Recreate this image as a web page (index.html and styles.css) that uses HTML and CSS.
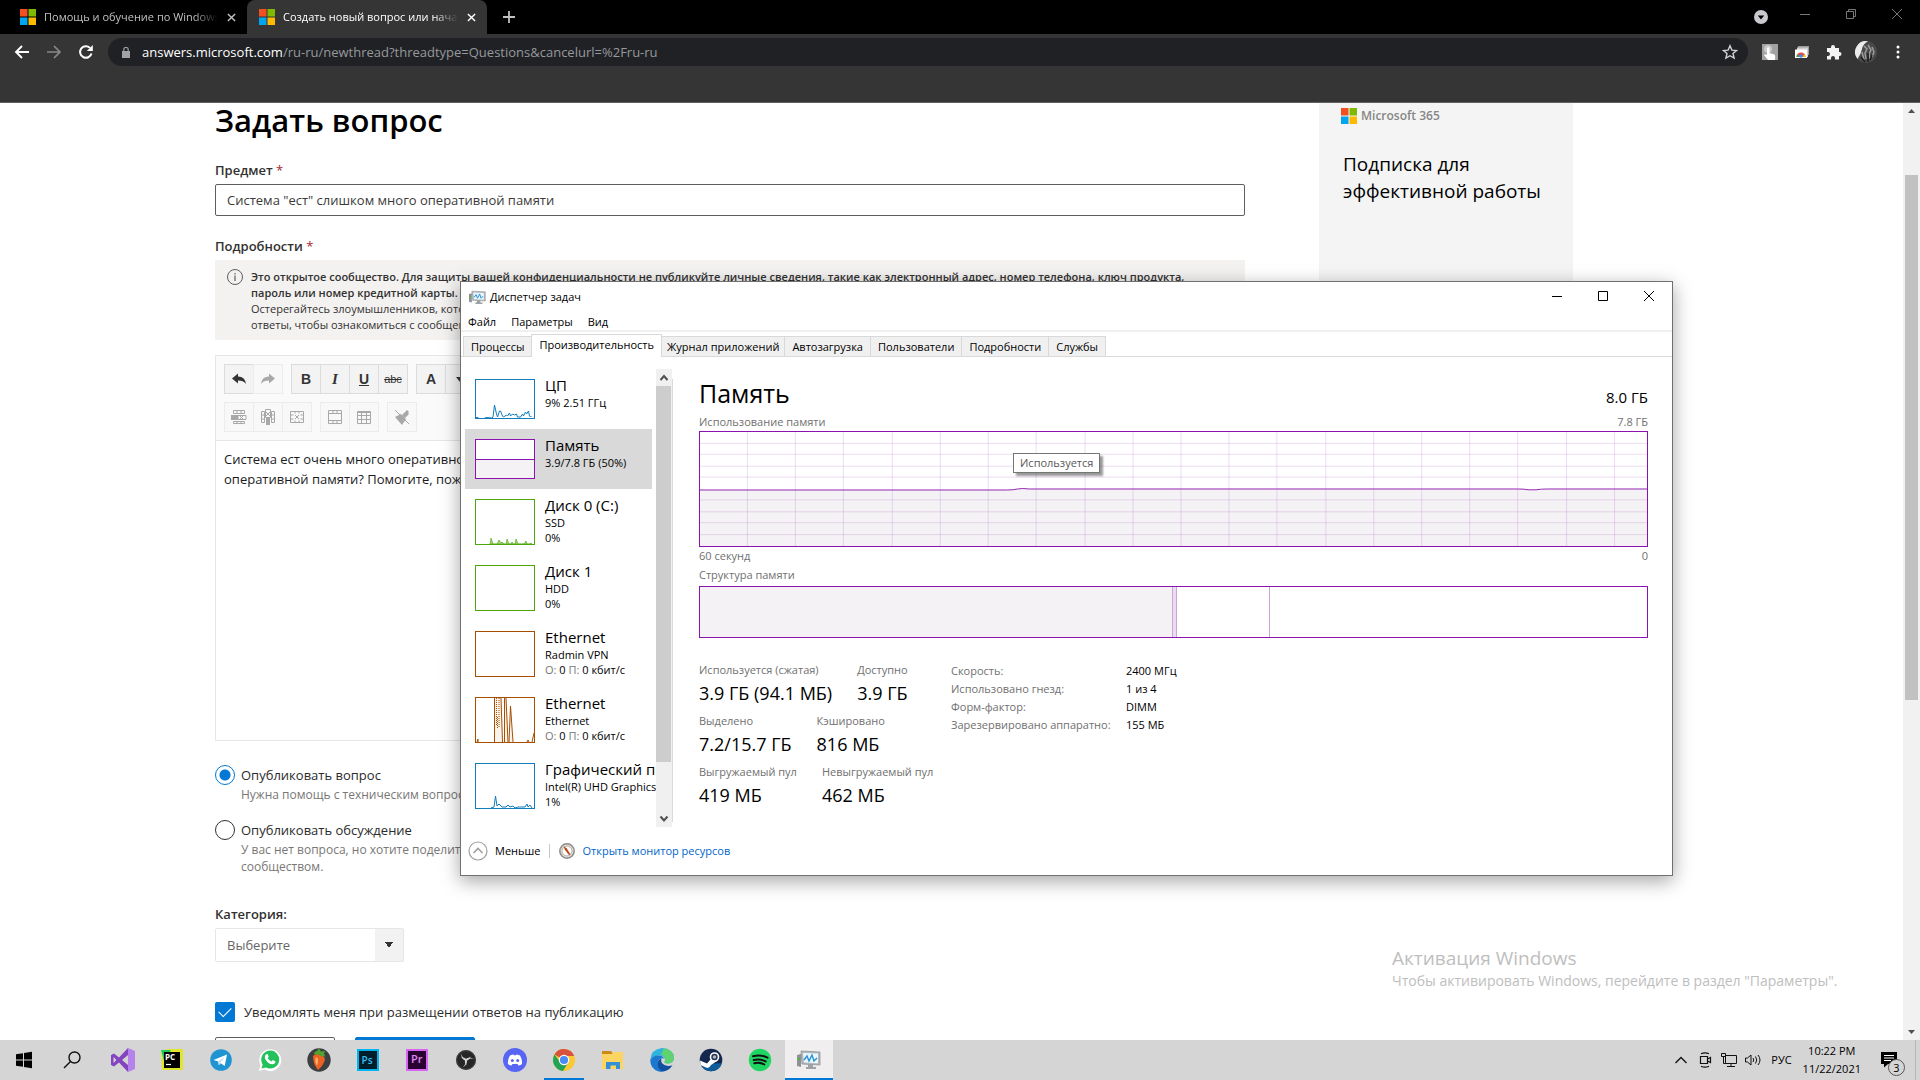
FILE: index.html
```
<!DOCTYPE html>
<html lang="ru">
<head>
<meta charset="utf-8">
<title>Создать новый вопрос или начать обсуждение</title>
<link rel="stylesheet" href="styles.css">
</head>
<body>
<svg class="defs" aria-hidden="true">
  <symbol id="ms" viewBox="0 0 16 16"><path fill="#f25022" d="M0 0h7.5v7.5H0z"/><path fill="#7fba00" d="M8.5 0H16v7.5H8.5z"/><path fill="#00a4ef" d="M0 8.500h7.5V16H0z"/><path fill="#ffb900" d="M8.500 8.500H16V16H8.500z"/></symbol>
  <symbol id="x" viewBox="0 0 10 10"><path d="M1 1l8 8M9 1L1 9" fill="none" stroke="currentColor" stroke-width="1.600"/></symbol>
  <symbol id="taskmgr" viewBox="0 0 24 20"><path d="M0 5l4-1v13l-4-1z" fill="#8d9296"/><path d="M1 8h2v2H1z" fill="#4fb828"/><path d="M4 1l19 1v13L5 14z" fill="#b4b9bd" stroke="#85898d" stroke-width=".7"/><path d="M6 3l15 .6v9.600L7 12.500z" fill="#eaf5fc"/><path d="M7 10l3-4 2 5 3-6 2 6 3-3" fill="none" stroke="#2893d3" stroke-width="1.400"/><path d="M11 14h5v3h3v2H9v-2h2z" fill="#9da2a6"/></symbol>
</svg>

<header class="browser">
  <div class="tabstrip">
    <div class="tab">
      <svg class="favicon"><use href="#ms"/></svg>
      <span class="tab-title">Помощь и обучение по Windows</span>
      <button class="tab-close" aria-label="Закрыть вкладку"><svg><use href="#x"/></svg></button>
    </div>
    <div class="tab tab-active">
      <svg class="favicon"><use href="#ms"/></svg>
      <span class="tab-title">Создать новый вопрос или начать</span>
      <button class="tab-close" aria-label="Закрыть вкладку"><svg><use href="#x"/></svg></button>
    </div>
    <button class="new-tab" aria-label="Новая вкладка"><svg viewBox="0 0 12 12"><path d="M6 0v12M0 6h12" stroke="currentColor" stroke-width="1.800"/></svg></button>
    <button class="tab-search" aria-label="Поиск вкладок"><svg viewBox="0 0 14 14"><circle cx="7" cy="7" r="7" fill="#c7c9cc"/><path d="M3.800 5.500h6.400L7 9.500z" fill="#000"/></svg></button>
    <div class="caption">
      <button aria-label="Свернуть"><svg viewBox="0 0 10 10"><path d="M0 5.500h10"/></svg></button>
      <button aria-label="Восстановить"><svg viewBox="0 0 10 10"><path d="M.5 2.500h7v7h-7zM2.500 2.500v-2h7v7h-2"/></svg></button>
      <button aria-label="Закрыть"><svg viewBox="0 0 10 10"><path d="M0 0l10 10M10 0L0 10"/></svg></button>
    </div>
  </div>
  <div class="toolbar">
    <button aria-label="Назад"><svg viewBox="0 0 16 16"><path d="M15 8H2M8 2L2 8l6 6" fill="none" stroke="#fff" stroke-width="1.900"/></svg></button>
    <button aria-label="Вперёд"><svg viewBox="0 0 16 16"><path d="M1 8h13M8 2l6 6-6 6" fill="none" stroke="#87888a" stroke-width="1.700"/></svg></button>
    <button aria-label="Обновить"><svg viewBox="0 0 16 16"><path d="M13.500 9.500A5.800 5.800 0 1 1 12 3.900" fill="none" stroke="#fff" stroke-width="2"/><path d="M14.800 1v6h-6z" fill="#fff"/></svg></button>
    <div class="omnibox">
      <svg class="lock" viewBox="0 0 8 11"><path d="M0 4h8v7H0z" fill="#a0a2a5"/><path d="M1.800 4V2.500a2.200 2 0 0 1 4.400 0V4" fill="none" stroke="#a0a2a5" stroke-width="1.200"/></svg>
      <span class="url"><b>answers.microsoft.com</b>/ru-ru/newthread?threadtype=Questions&amp;cancelurl=%2Fru-ru</span>
      <svg class="star" viewBox="0 0 16 16"><path d="M8 1.800l1.900 4.300 4.600.4-3.500 3 1.100 4.600L8 11.700l-4.100 2.400L5 9.500l-3.500-3 4.600-.4z" fill="none" stroke="#d0d2d5" stroke-width="1.400"/></svg>
    </div>
    <div class="extensions">
      <button aria-label="Жесты"><svg viewBox="0 0 16 16"><path d="M0 0h16v16H0z" fill="#a2a2a2"/><circle cx="6" cy="5" r="4" fill="#c9c9c9"/><path d="M5 4q1.500-1.500 2.500 0v5l5 1.500q1 .5.500 5.500H6l-4-5q1-1.500 3 0z" fill="#fff"/></svg></button>
      <button aria-label="Интернет-магазин"><svg viewBox="0 0 16 16"><path d="M4 2h11v9H4z" fill="#9a9a9a"/><path d="M3 3.500h11V13H3z" fill="#cfcfcf"/><path d="M1 5.500h12V14H1z" fill="#fff"/><path d="M2.500 13a4.500 4.500 0 0 1 9 0z" fill="#e8453c"/><path d="M2.500 13a4.500 4.500 0 0 1 1-3L6 13z" fill="#35a853"/><path d="M11.500 13a4.500 4.500 0 0 0-1-3L8 13z" fill="#fabb05"/><circle cx="7" cy="12" r="1.800" fill="#4285f4"/></svg></button>
      <button aria-label="Расширения"><svg viewBox="0 0 16 16"><path d="M1 4h4V3a2 2 0 0 1 4 0v1h4v4h.5a2 2 0 0 1 0 4H13v3.500H9V14a2 2 0 0 0-4 0v1.500H1V12h1a2 2 0 0 0 0-4H1z" fill="#f3f3f3"/></svg></button>
      <button class="avatar" aria-label="Профиль"><svg viewBox="0 0 22 22"><circle cx="11" cy="11" r="11" fill="#4a4a4a"/><path d="M2.500 18A11 11 0 0 1 13 .3Q8 3 7 8t-4.500 10z" fill="#ececec"/><path d="M9 5l3 3-2 4 1 6M13 4l3 5-2 4 1 5M17 6l2 5-2 5M7 11l2 8" stroke="#9c9c9c" stroke-width="1.500" fill="none"/><path d="M6 16l4 5M13 12l0 9M17 14l-2 5" stroke="#1c1c1c" stroke-width="1.500"/></svg></button>
      <button aria-label="Меню"><svg viewBox="0 0 16 16"><circle cx="8" cy="3" r="1.500" fill="#fff"/><circle cx="8" cy="8" r="1.500" fill="#fff"/><circle cx="8" cy="13" r="1.500" fill="#fff"/></svg></button>
    </div>
  </div>
  <div class="bookmarks"></div>
</header>

<div class="viewport">
  <div class="page">
    <form class="question">
      <h1>Задать вопрос</h1>
      <label class="field-label" for="subject">Предмет <span class="req">*</span></label>
      <input class="subject" id="subject" type="text" value='Система "ест" слишком много оперативной памяти'>
      <label class="field-label details-label" for="details">Подробности <span class="req">*</span></label>
      <div class="notice">
        <svg viewBox="0 0 16 16"><circle cx="8" cy="8" r="7.500" fill="none" stroke="#5f5e5c"/><path d="M8 6.500V12M8 4v1.500" stroke="#5f5e5c" stroke-width="1.200"/></svg>
        <p><b>Это открытое сообщество. Для защиты вашей конфиденциальности не публикуйте личные сведения, такие как электронный адрес, номер телефона, ключ продукта,<br>пароль или номер кредитной карты.</b><br>Остерегайтесь злоумышленников, которые<br>ответы, чтобы ознакомиться с сообщениями.</p>
      </div>
      <div class="editor">
        <div class="editor-tools">
          <div class="tool-row">
            <div class="group">
              <button type="button" aria-label="Отменить"><svg viewBox="0 0 16 16"><path d="M1 7.500L7 2.500v3c5 0 7.500 3 8 7.500-2-3-4.500-3.500-8-3.500v3z" fill="#333"/></svg></button>
              <button type="button" class="dim" aria-label="Вернуть"><svg viewBox="0 0 16 16"><path d="M15 7.500L9 2.500v3c-5 0-7.500 3-8 7.500 2-3 4.500-3.500 8-3.500v3z" fill="#333"/></svg></button>
            </div>
            <div class="group">
              <button type="button" class="bold">B</button>
              <button type="button" class="italic">I</button>
              <button type="button" class="under">U</button>
              <button type="button" class="strike">abc</button>
            </div>
            <div class="group">
              <button type="button" class="bold">A</button>
              <button type="button" aria-label="Цвет"><svg viewBox="0 0 16 16"><path d="M4 6h8l-4 5z" fill="#333"/></svg></button>
            </div>
          </div>
          <div class="tool-row">
            <div class="group dim">
              <button type="button" aria-label="Удалить строку"><svg viewBox="0 0 16 16"><path d="M2.500 1.500h11v3h-11zM6 1.500v3M10 1.500v3M7 6.500h8v4H7zM2.500 12.500h11v2h-11zM6 12v3M10 12v3M9 7l3 3M12 7l-3 3" fill="none" stroke="#333"/><path d="M0 6h7v5H0z" fill="#333"/></svg></button>
              <button type="button" aria-label="Удалить столбец"><svg viewBox="0 0 16 16"><path d="M1.500 2.500h3v11h-3zM1.500 6h3M1.500 10h3M11.500 2.500h3v11h-3zM11.500 6h3M11.500 10h3M5.500.5h5v8h-5zM6 3l4 4M10 3L6 7" fill="none" stroke="#333"/><path d="M6 9h4v7H6z" fill="#333"/></svg></button>
              <button type="button" aria-label="Удалить таблицу"><svg viewBox="0 0 16 16"><path d="M1.500 2.500h13v11h-13zM1.500 6h3M1.500 10h3M11.500 6h3M11.500 10h3M6 2.500v2M10 2.500v2M6 11.500v2M10 11.500v2M6 6l4 4M10 6l-4 4" fill="none" stroke="#333"/></svg></button>
            </div>
            <div class="group dim">
              <button type="button" aria-label="Свойства ячейки"><svg viewBox="0 0 16 16"><path d="M1.500 1.500h13v13h-13zM1.500 4.500h13M1.500 11.500h13M6 1.500v3M10 1.500v3M6 11.500v3M10 11.500v3" fill="none" stroke="#333"/></svg></button>
              <button type="button" aria-label="Вставить таблицу"><svg viewBox="0 0 16 16"><path d="M1.500 2.500h13v12h-13zM1.500 6.500h13M1.500 10.500h13M5.500 2.500v12M10.500 2.500v12M2 3.500h12" fill="none" stroke="#333"/></svg></button>
            </div>
            <div class="group dim">
              <button type="button" aria-label="Очистить форматирование"><svg viewBox="0 0 16 16"><path d="M1 8l6-3 5 5-4 6z" fill="#333"/><path d="M8 6l5-5 2 2-1 1 1 1-4 4z" fill="#333"/><path d="M1 1l14 14" stroke="#333"/></svg></button>
            </div>
          </div>
        </div>
        <textarea class="details" id="details">Система ест очень много оперативной памяти. Как уменьшить потребление
оперативной памяти? Помогите, пожалуйста.</textarea>
      </div>
      <div class="choice">
        <input type="radio" name="kind" id="kind-q" checked>
        <label for="kind-q">Опубликовать вопрос</label>
        <p>Нужна помощь с техническим вопросом</p>
      </div>
      <div class="choice">
        <input type="radio" name="kind" id="kind-d">
        <label for="kind-d">Опубликовать обсуждение</label>
        <p>У вас нет вопроса, но хотите поделиться<br>сообществом.</p>
      </div>
      <label class="field-label category-label" for="category">Категория:</label>
      <select class="category" id="category"><option>Выберите</option></select>
      <div class="notify">
        <input type="checkbox" id="notify" checked>
        <label for="notify">Уведомлять меня при размещении ответов на публикацию</label>
      </div>
      <div class="actions">
        <button type="button" aria-label="Отмена"></button>
        <button type="submit" class="primary" aria-label="Отправить"></button>
      </div>
    </form>
    <aside class="promo">
      <div class="promo-logo"><svg><use href="#ms"/></svg><span>Microsoft 365</span></div>
      <h2>Подписка для эффективной работы</h2>
    </aside>
  </div>
  <div class="scrollbar">
    <svg viewBox="0 0 17 17"><path d="M5 10h7L8.500 6z" fill="#505050"/></svg>
    <div class="thumb"></div>
    <svg viewBox="0 0 17 17"><path d="M5 7h7l-3.500 4z" fill="#505050"/></svg>
  </div>
</div>

<div class="watermark">
  <strong>Активация Windows</strong>
  <span>Чтобы активировать Windows, перейдите в раздел "Параметры".</span>
</div>

<section class="window" aria-label="Диспетчер задач">
  <div class="titlebar">
    <svg><use href="#taskmgr"/></svg>
    <span>Диспетчер задач</span>
    <div class="caption">
      <button aria-label="Свернуть"><svg viewBox="0 0 10 10"><path d="M0 5.500h10"/></svg></button>
      <button aria-label="Развернуть"><svg viewBox="0 0 10 10"><path d="M.5.5h9v9h-9z"/></svg></button>
      <button aria-label="Закрыть"><svg viewBox="0 0 10 10"><path d="M0 0l10 10M10 0L0 10"/></svg></button>
    </div>
  </div>
  <div class="menubar"><button>Файл</button><button>Параметры</button><button>Вид</button></div>
  <div class="tabs" role="tablist">
    <button role="tab">Процессы</button><button role="tab" class="selected">Производительность</button><button role="tab">Журнал приложений</button><button role="tab">Автозагрузка</button><button role="tab">Пользователи</button><button role="tab">Подробности</button><button role="tab">Службы</button>
  </div>
  <div class="content">
    <div class="sidebar">
      <ul class="devices">
        <li>
          <svg class="mini cpu" viewBox="0 0 60 40"><rect x=".5" y=".5" width="59" height="39"/><path d="M1 38.500h2l1 1h5l2-1 6 .5 1-1 1.500-12 2 9 1 3 2-6 1 0 2 5 1 1 3-2 1 1 2-3 1 3 2-2 2 1 2-1 1 3h3l2-3 1 2 2-4 1 2 2-3 1 5 1 1 1-1"/></svg>
          <div><h3>ЦП</h3><p>9% 2.51 ГГц</p></div>
        </li>
        <li class="current">
          <svg class="mini mem" viewBox="0 0 60 40"><rect x=".5" y=".5" width="59" height="39"/><path class="usage" d="M1 20.500h58V39H1z"/><path d="M1 20.500h58"/></svg>
          <div><h3>Память</h3><p>3.9/7.8 ГБ (50%)</p></div>
        </li>
        <li>
          <svg class="mini disk" viewBox="0 0 60 46"><rect x=".5" y=".5" width="59" height="45"/><path class="solid" d="M15 45l1-6 2 6h4l2-4 2 3 1-1 2 2h2l1-5 2 5h2l1-2 1 2h2l1-5 2 5h6l2-3 1 3h3l1-1 1 1z"/></svg>
          <div><h3>Диск 0 (C:)</h3><p>SSD</p><p>0%</p></div>
        </li>
        <li>
          <svg class="mini disk" viewBox="0 0 60 46"><rect x=".5" y=".5" width="59" height="45"/></svg>
          <div><h3>Диск 1</h3><p>HDD</p><p>0%</p></div>
        </li>
        <li>
          <svg class="mini net" viewBox="0 0 60 46"><rect x=".5" y=".5" width="59" height="45"/></svg>
          <div><h3>Ethernet</h3><p>Radmin VPN</p><p><i>О:</i> 0 <i>П:</i> 0 кбит/с</p></div>
        </li>
        <li>
          <svg class="mini net" viewBox="0 0 60 46"><rect x=".5" y=".5" width="59" height="45"/><path class="fill" d="M19 1h7l2 44h-9zM29 1h2l2 44h-4zM34 45l2-36 2 36z"/><path d="M19.500 1v44M26 1l1.500 44M29.500 1v44M31 1l2 44M34 45l1.500-36L38 45M2 45l1-3 0 3M52 45l1-2 1 2M57 45l2-9"/><path stroke-dasharray="1 1" d="M21.500 1v28M24 1v30M22.500 20v12"/></svg>
          <div><h3>Ethernet</h3><p>Ethernet</p><p><i>О:</i> 0 <i>П:</i> 0 кбит/с</p></div>
        </li>
        <li>
          <svg class="mini cpu" viewBox="0 0 60 46"><rect x=".5" y=".5" width="59" height="45"/><path d="M16 45l3-1 1.500-11L22 43l2-2 3 3h4l2-2 2 2 3-1 2 2 3-1h7l2-3 1 3 2-2 2 3"/></svg>
          <div><h3>Графический процессор 0</h3><p>Intel(R) UHD Graphics</p><p>1%</p></div>
        </li>
      </ul>
      <div class="list-scroll">
        <svg viewBox="0 0 16 17"><path d="M4.500 11L8 7l3.500 4" fill="none" stroke="#505050" stroke-width="2"/></svg>
        <div class="thumb"></div>
        <svg viewBox="0 0 16 17"><path d="M4.500 6.500l3.500 4 3.500-4" fill="none" stroke="#505050" stroke-width="2"/></svg>
      </div>
    </div>
    <div class="pane">
      <div class="pane-head"><h2>Память</h2><span>8.0 ГБ</span></div>
      <div class="caption-row"><span>Использование памяти</span><span>7.8 ГБ</span></div>
      <div class="chart">
        <svg viewBox="0 0 948 115" preserveAspectRatio="none">
          <path d="M0 58h309l8-1h12l8 0h485l8 1h12l8-1h98v58H0z" fill="#f4f2f4"/>
          <path class="grid" d="M47.500 0v115M95.500 0v115M143.500 0v115M192.500 0v115M240.500 0v115M288.500 0v115M336.500 0v115M385.500 0v115M433.500 0v115M481.500 0v115M529.500 0v115M577.500 0v115M626.500 0v115M674.500 0v115M722.500 0v115M770.500 0v115M818.500 0v115M867.500 0v115M915.500 0v115M0 11.500h948M0 22.500h948M0 34.500h948M0 45.500h948M0 68.500h948M0 80.500h948M0 91.500h948M0 103.500h948"/>
          <path d="M0 58.500h308q6 0 10-1t12 0h488q8 0 11 .8h8q5-.8 11-.8h100" fill="none" stroke="#9528b4"/>
        </svg>
        <div class="tooltip" role="tooltip">Используется</div>
      </div>
      <div class="caption-row"><span>60 секунд</span><span>0</span></div>
      <div class="caption-row second"><span>Структура памяти</span></div>
      <div class="composition"><span class="used"></span><span class="modified"></span><span class="standby"></span><span class="free"></span></div>
      <div class="stats">
        <div class="stat-rows">
          <div><dl><dt>Используется (сжатая)</dt><dd>3.9 ГБ (94.1 МБ)</dd></dl><dl><dt>Доступно</dt><dd>3.9 ГБ</dd></dl></div>
          <div><dl><dt>Выделено</dt><dd>7.2/15.7 ГБ</dd></dl><dl><dt>Кэшировано</dt><dd>816 МБ</dd></dl></div>
          <div><dl><dt>Выгружаемый пул</dt><dd>419 МБ</dd></dl><dl><dt>Невыгружаемый пул</dt><dd>462 МБ</dd></dl></div>
        </div>
        <table class="specs">
          <tr><th scope="row">Скорость:</th><td>2400 МГц</td></tr>
          <tr><th scope="row">Использовано гнезд:</th><td>1 из 4</td></tr>
          <tr><th scope="row">Форм-фактор:</th><td>DIMM</td></tr>
          <tr><th scope="row">Зарезервировано аппаратно:</th><td>155 МБ</td></tr>
        </table>
      </div>
    </div>
  </div>
  <div class="window-foot">
    <button><svg class="less" viewBox="0 0 20 20"><circle cx="10" cy="10" r="9" fill="#fff" stroke="#a0a0a0" stroke-width="1.200"/><path d="M5.500 12L10 7.500l4.500 4.500" fill="none" stroke="#a0a0a0" stroke-width="1.600"/></svg>Меньше</button>
    <span class="divider"></span>
    <a href="#resmon"><svg viewBox="0 0 16 16"><circle cx="8" cy="8" r="7.200" fill="#e9e4df" stroke="#8a8a8a" stroke-width="1.500"/><circle cx="8" cy="8" r="5" fill="#fff" stroke="#b9aaa0"/><path d="M4.500 3.500l3 1.500 4 6.500-1.500.5-4-5z" fill="#b5481c"/></svg>Открыть монитор ресурсов</a>
  </div>
</section>

<footer class="taskbar">
  <nav class="apps">
    <button aria-label="Пуск"><svg viewBox="0 0 24 24"><path d="M4 6.200l7-1v6.300H4zM12 5l8-1.200v7.700h-8zM4 12.500h7v6.300l-7-1zM12 12.500h8v7.700L12 19z"/></svg></button>
    <button aria-label="Поиск"><svg viewBox="0 0 24 24"><circle cx="14.500" cy="9.500" r="5.500" fill="none" stroke="#111" stroke-width="1.400"/><path d="M10.500 13.500L4 20" stroke="#111" stroke-width="1.500"/></svg></button>
    <button aria-label="Visual Studio"><svg viewBox="0 0 24 24"><path d="M0 7l3-1.500 5 4L17 0v24l-9-9.500-5 4L0 17zM2.500 9v6l3-3zM11 12l6 5V7z" fill="#8544bf" fill-rule="evenodd"/><path d="M17 0l7 3v18l-7 3z" fill="#b583ea"/></svg></button>
    <button aria-label="PyCharm"><svg viewBox="0 0 24 24"><path d="M1 3l7-2h15v21H2z" fill="#dfe62b"/><path d="M1 2h10L4 13z" fill="#21c95c"/><path d="M4 4h16v16H4z"/><text x="5" y="12" class="logo-pc">PC</text><path d="M6 16.500h5" stroke="#fff" stroke-width="1.200"/></svg></button>
    <button aria-label="Telegram"><svg viewBox="0 0 24 24"><circle cx="12" cy="12" r="10.800" fill="#1f94d2"/><path d="M4.500 12L18 6.500l-2.300 11.500-4-2.800-2 2-.5-3.700z" fill="#fff"/><path d="M9.200 13.500L16 8.500l-5 6-.8 2.500z" fill="#b9d9ea"/></svg></button>
    <button aria-label="WhatsApp"><svg viewBox="0 0 24 24"><path d="M.8 23l1.700-5.800A11 11 0 1 1 6.500 21.500z" fill="#fff"/><path d="M3.500 20.500l1.200-4A9 9 0 1 1 8 19.500z" fill="#22c15a"/><path d="M8 6.500q1.500-1 2 .5l.7 1.800-1 1.500q1.500 2.500 3.800 3.200l1.300-1.500 2.500 1.200q.5 2.300-2.500 3-4.500.3-7.500-5-1.200-3 .7-4.700z" fill="#fff"/></svg></button>
    <button aria-label="FL Studio"><svg viewBox="0 0 24 24"><circle cx="12" cy="12" r="11.700" fill="#3b3f42"/><path d="M6 8q3-3 7-1.500t5 4.500q-1 6-7 11-5-6-5-14z" fill="#ea6123"/><path d="M8.500 10q2.500-1.500 2.500 2t-1 6q-2.500-4-1.500-8z" fill="#fdb166"/><path d="M7 6.500q0-3 3-3.500l2-2.500 2 3 4-.5-1 3 1.500 2.500-5.500-.5-2-2z" fill="#4fa32e"/></svg></button>
    <button aria-label="Photoshop"><svg viewBox="0 0 24 24"><path d="M1 1h22v22H1z" fill="#00b4f0"/><path d="M3 3h18v18H3z" fill="#001d2c"/><text x="5.500" y="16" class="logo-ps">Ps</text></svg></button>
    <button aria-label="Premiere Pro"><svg viewBox="0 0 24 24"><path d="M1 1h22v22H1z" fill="#d765f1"/><path d="M3 3h18v18H3z" fill="#2a0133"/><text x="6" y="15" class="logo-pr">Pr</text></svg></button>
    <button aria-label="OBS"><svg viewBox="0 0 24 24"><circle cx="12" cy="12" r="10" fill="#262627"/><circle cx="12" cy="12" r="9.300" fill="none" stroke="#4c4c4e" stroke-width=".8"/><path id="blade" d="M7.500 5.500Q8 10 12 11.500q3.500-.5 4.500-3.500-.5 4-4.500 5Q6.500 11 7.500 5.500z" fill="#d4d4d4"/><use href="#blade" transform="rotate(120 12 12)"/><use href="#blade" transform="rotate(240 12 12)"/></svg></button>
    <button aria-label="Discord"><svg viewBox="0 0 24 24"><circle cx="12" cy="12" r="12" fill="#5865f2"/><path d="M7 7.500q2.500-1 3.500-1l.5.800h2l.5-.8q1 0 3.500 1 2.500 4 2 8.500-2 1.500-3.500 1.500L14.500 16h-5l-1 1.500Q7 17.500 5 16q-.5-4.500 2-8.500z" fill="#fff"/><circle cx="9.300" cy="12.500" r="1.500" fill="#5865f2"/><circle cx="14.700" cy="12.500" r="1.500" fill="#5865f2"/></svg></button>
    <button class="running" aria-label="Chrome"><svg viewBox="0 0 24 24"><circle cx="12" cy="12" r="11" fill="#fcc934"/><path d="M12 12L2.500 6.500A11 11 0 0 1 22.200 8H12z" fill="#d9533c"/><path d="M2.500 6.500A11 11 0 0 0 11 23l5.500-9L12 12l-4 2z" fill="#23a455"/><circle cx="12" cy="12" r="5.200" fill="#fff"/><circle cx="12" cy="12" r="4.100" fill="#4c8bf5"/></svg></button>
    <button aria-label="Проводник"><svg viewBox="0 0 24 24"><path d="M1 3h9l1.500 2H22v4H1z" fill="#c98b16"/><path d="M1 6h10l1-2h10v17H1z" fill="#fcd462"/><path d="M5 21v-7h14v7h-4v-3.500H9.500V21z" fill="#338fd8"/></svg></button>
    <button aria-label="Edge"><svg viewBox="0 0 24 24"><path d="M.3 12Q1 1 12 0q11 .5 12 9.500Q24 15 18 15.500q-5 0-3-3Q15 8 10 7.500 3 7.500.3 12z" fill="#2eb3dd"/><path d="M14 .2Q23.500 2 24 9.500q0 5.500-6 6-5 0-3-3 1-4-4-6Z" fill="#5ed36f"/><path d="M.3 12Q3 7 9 7.500q4 .3 5 3-4-1-6 3-1 8 7 9.500-3 1.500-7 .3Q0 20.500.3 12z" fill="#1c78cf"/><path d="M8 13.500q1-2.500 3.500-3-1.500 4 3 6.500 4 2 8 .3-4 6.500-11 6-5-4-3.500-9.800z" fill="#124f9f"/></svg></button>
    <button aria-label="Steam"><svg viewBox="0 0 24 24"><circle cx="12" cy="12" r="11.300" fill="#13274f"/><path d="M1.500 16Q5 23 12 23.300q8-.5 11-8z" fill="#0f5e9b"/><path d="M1 12.500l7 3 4-4.500 6 2-6 4q-2 4-5 2.500L1.500 17z" fill="#fff"/><circle cx="15.500" cy="9" r="4" fill="#24324f" stroke="#fff" stroke-width="1.600"/><circle cx="15.500" cy="9" r="1.800" fill="#aeb6c2"/></svg></button>
    <button aria-label="Spotify"><svg viewBox="0 0 24 24"><circle cx="12" cy="12" r="11.200" fill="#1fd662"/><path d="M5 8.300q8-2 14.500 1.400M5.700 12q6.500-1.500 12 1.400M6.300 15.300q5.500-1.300 10 1.200" fill="none" stroke="#111" stroke-width="2" stroke-linecap="round"/></svg></button>
    <button class="active" aria-label="Диспетчер задач"><svg viewBox="0 0 24 24"><use href="#taskmgr" y="2" width="24" height="20"/></svg></button>
  </nav>
  <div class="tray">
    <svg viewBox="0 0 16 16"><path d="M2.500 11L8 5.500l5.500 5.500" fill="none" stroke="#111" stroke-width="1.300"/></svg>
    <svg viewBox="0 0 16 16"><path d="M3.500 4.500h7v7h-7zM10.500 7l3-1.500v5l-3-1.500M4 1.800q4-2 8 0M4 14.200q4 2 8 0" fill="none" stroke="#111" stroke-width="1.200"/></svg>
    <svg viewBox="0 0 16 16"><path d="M4.500 3.500h11v8h-11zM10 11.500v3M6 14.500h8M.5 1.500h4v3h-4zM2.500 4.500v7h2" fill="none" stroke="#111"/></svg>
    <svg viewBox="0 0 16 16"><path d="M.5 6h2L6 3v10l-3.500-3h-2zM8 6q1.500 2 0 4M10.500 4.500q2.500 3.500 0 7M13 3q4 5 0 10" fill="none" stroke="#111"/></svg>
    <span class="lang">РУС</span>
    <time class="clock" datetime="2021-11-22T22:22"><span>10:22 PM</span><span>11/22/2021</span></time>
    <button class="notifications" aria-label="Уведомления"><svg viewBox="0 0 16 16"><path d="M0 0h16v12H7l-4 3.500V12H0z"/><path d="M3 3.500h10M3 6h10M3 8.500h7" stroke="#fff"/></svg><span class="badge">3</span></button>
  </div>
</footer>
</body>
</html>
```
FILE: styles.css
```
* { box-sizing: border-box; margin: 0; padding: 0; }
body {
  display: flex;
  flex-direction: column;
  height: 100vh;
  overflow: hidden;
  position: relative;
  background: #fff;
  color: #000;
  font: 11px/16px "Open Sans", "Noto Sans", sans-serif;
}
button, input, textarea, select { font: inherit; color: inherit; }
button { background: none; border: 0; display: flex; align-items: center; justify-content: center; }
svg { display: block; flex: none; }
.defs { position: absolute; width: 0; height: 0; }

/* Browser frame */
.browser { flex: none; background: #353535; border-bottom: 1px solid #616161; }
.tabstrip { display: flex; height: 34px; padding-left: 8px; background: #000; color: #bfc1c4; }
.tab { display: flex; align-items: center; width: 239px; padding: 0 11px 0 12px; }
.tab-active { width: 240px; background: #353535; color: #fff; border-radius: 8px 8px 0 0; }
.favicon { width: 16px; height: 16px; margin-right: 8px; }
.tab-title {
  flex: 1;
  overflow: hidden;
  white-space: nowrap;
  -webkit-mask-image: linear-gradient(90deg, #000 86%, transparent);
  mask-image: linear-gradient(90deg, #000 86%, transparent);
}
.tab-close { width: 10px; height: 16px; margin-left: 8px; }
.tab-close svg { width: 9px; height: 9px; }
.new-tab { width: 44px; }
.new-tab svg { width: 12px; height: 12px; }
.tab-search { margin-left: auto; width: 42px; }
.tab-search svg { width: 14px; height: 14px; }
.caption { display: flex; height: 28px; }
.caption button { width: 46px; }
.caption svg { width: 10px; height: 10px; fill: none; stroke: currentColor; overflow: visible; }
.tabstrip .caption { color: #77787a; }
.toolbar { display: flex; align-items: center; height: 36px; padding: 0 6px; }
.toolbar > button { width: 32px; height: 32px; }
.toolbar svg { width: 16px; height: 16px; }
.omnibox {
  flex: 1;
  display: flex;
  align-items: center;
  height: 28px;
  margin: 0 6px;
  padding: 0 10px 0 14px;
  border-radius: 14px;
  background: #202124;
  color: #96999d;
  font-size: 13px;
}
.omnibox .lock { width: 8px; height: 11px; margin-right: 12px; }
.url { flex: 1; white-space: nowrap; }
.url b { font-weight: 400; color: #fff; }
.extensions { display: flex; }
.extensions button { width: 32px; height: 32px; }
.extensions .avatar svg { width: 22px; height: 22px; }
.bookmarks { height: 32px; }

/* Page */
.viewport { flex: 1; min-height: 0; display: flex; overflow: hidden; }
.page {
  flex: 1;
  display: grid;
  grid-template-columns: minmax(0, 1fr) 254px;
  column-gap: 74px;
  padding: 0 330px 0 215px;
  color: #2b2b2b;
  font-size: 13px;
  line-height: 20px;
}
h1 { margin-bottom: 23px; font-size: 31px; line-height: 34px; font-weight: 600; color: #000; }
.field-label { display: block; margin-bottom: 4px; font-weight: 600; color: #323130; }
.req { color: #a4262c; font-weight: 400; }
.subject {
  display: block;
  width: 100%;
  height: 32px;
  padding: 0 11px;
  border: 1px solid #605e5c;
  border-radius: 2px;
  color: #3b3a39;
}
.details-label { margin-top: 20px; }
.notice {
  display: flex;
  gap: 8px;
  padding: 9px 12px 7px;
  background: #f3f2f1;
  color: #323130;
  font-size: 11px;
  line-height: 16px;
  white-space: nowrap;
}
.notice svg { width: 16px; height: 16px; }
.notice b { font-weight: 600; }
.editor { margin-top: 15px; border: 1px solid #e6e6e6; }
.editor-tools { display: grid; gap: 8px; padding: 8px; background: #fafafa; border-bottom: 1px solid #e6e6e6; }
.tool-row { display: flex; gap: 8px; }
.group { display: flex; }
.group button {
  width: 30px;
  height: 30px;
  margin-right: -1px;
  border: 1px solid #dcdcdc;
  background: #f3f3f3;
  color: #333;
  font: 14px/20px "Liberation Sans", sans-serif;
}
.group button:last-child { margin-right: 0; }
.group svg { width: 16px; height: 16px; }
.dim svg { opacity: .4; }
.group button.dim, .group.dim button { border-color: #ececec; background: #f8f8f8; }
.group .bold { font-weight: 700; }
.group .italic { font: italic 700 15px/20px "Liberation Serif", serif; }
.group .under { font-weight: 700; text-decoration: underline; }
.group .strike { font-size: 11px; text-decoration: line-through; }
.details { display: block; width: 100%; height: 299px; padding: 8px; border: 0; resize: none; color: #1b1b1b; overflow: hidden; line-height: 20px; }
.choice { display: grid; grid-template-columns: 20px 1fr; column-gap: 6px; margin-top: 17px; }
.editor + .choice { margin-top: 24px; }
.choice input { appearance: none; width: 20px; height: 20px; border: 1px solid #323130; border-radius: 50%; }
.choice input:checked { border-color: #0078d4; background: radial-gradient(circle, #0078d4 5px, #fff 6px); }
.choice p { grid-column: 2; margin-top: 1px; color: #797775; font-size: 12px; line-height: 17px; white-space: nowrap; }
.category-label { margin-top: 29px; }
.category {
  appearance: none;
  display: block;
  width: 189px;
  height: 34px;
  padding: 0 11px;
  border: 1px solid #e6e6e6;
  border-radius: 2px;
  color: #666;
  background:
    linear-gradient(to bottom left, #333 50%, transparent 52%) right 14px top 13px / 4px 6px no-repeat,
    linear-gradient(to bottom right, #333 50%, transparent 52%) right 10px top 13px / 4px 6px no-repeat,
    linear-gradient(#f2f2f2, #f2f2f2) right / 28px 100% no-repeat,
    #fff;
}
.notify { display: flex; gap: 9px; margin-top: 40px; }
.notify input {
  appearance: none;
  width: 20px;
  height: 20px;
  padding-bottom: 3px;
  border-radius: 2px;
  background: #0078d4;
  display: grid;
  place-items: center;
}
.notify input::before { content: ""; width: 11px; height: 6px; border: solid #fff; border-width: 0 0 1px 1px; transform: rotate(-45deg); }
.actions { display: flex; gap: 20px; margin-top: 15px; }
.actions button { width: 120px; height: 32px; border: 1px solid #605e5c; border-radius: 2px; }
.actions .primary { background: #0078d4; border-color: #0078d4; color: #fff; }
.promo { height: 500px; padding: 4px 22px; background: #f4f4f4; }
.promo-logo { display: flex; align-items: center; gap: 4px; font-size: 12px; line-height: 17px; font-weight: 600; color: #868686; }
.promo-logo svg { width: 16px; height: 16px; }
.promo h2 { margin: 27px 2px 0; font-size: 19px; line-height: 27px; font-weight: 400; color: #000; }
.scrollbar { display: flex; flex-direction: column; width: 17px; background: #f1f1f1; }
.scrollbar svg { width: 17px; height: 17px; }
.scrollbar .thumb { height: 56%; margin: 55px 2px auto; background: #c1c1c1; }

.watermark { position: absolute; left: 1392px; bottom: 89px; display: grid; color: #bebebe; font-size: 14px; line-height: 20px; white-space: nowrap; }
.watermark strong { font-size: 19px; line-height: 26px; font-weight: 400; }

/* Task Manager */
.window {
  position: absolute;
  left: 460px;
  top: 281px;
  width: 1213px;
  display: flex;
  flex-direction: column;
  border: 1px solid #707070;
  background: #fff;
  box-shadow: 0 5px 18px rgba(0, 0, 0, .36);
}
.titlebar { display: flex; align-items: center; height: 30px; padding-left: 8px; }
.titlebar > svg { width: 17px; height: 15px; margin-right: 4px; }
.titlebar .caption { margin-left: auto; height: 28px; align-self: flex-start; }
.menubar { display: flex; gap: 15px; height: 20px; padding: 1px 7px 0; border-bottom: 2px solid #f0f0f0; }
.tabs { display: flex; align-items: flex-end; height: 25px; padding-left: 2px; box-shadow: inset 0 -1px #d9d9d9; }
.tabs button { height: 21px; margin-right: -1px; padding: 0 7px; border: 1px solid #d9d9d9; background: #f0f0f0; white-space: nowrap; }
.tabs .selected { height: 23px; padding: 0 7px 3px; background: #fff; border-bottom: 0; z-index: 1; }
.tabs .selected + button { padding: 0 5px; }
.content { display: flex; }
.sidebar { display: flex; width: 212px; margin-top: 12px; padding-left: 4px; height: 458px; }
.sidebar::after { content: ""; width: 1px; margin: 10px 0 5px; background: #d9d9d9; }
.devices { flex: 1; min-width: 0; overflow: hidden; list-style: none; }
.devices li { display: flex; gap: 10px; margin-right: 4px; padding: 10px; white-space: nowrap; }
.devices div { margin: -4px 0; line-height: 15px; }
.devices .current { background: #d9d9d9; }
.devices h3 { font-size: 15px; line-height: 20px; font-weight: 400; }
.devices i { font-style: normal; color: #767676; }
.mini { width: 60px; height: auto; fill: none; stroke: currentColor; }
.mini rect { fill: #fff; }
.mini .fill { fill: currentColor; fill-opacity: .07; stroke: none; }
.mini .usage { fill: #f4f2f4; stroke: none; }
.mini .solid { fill: currentColor; fill-opacity: .5; stroke-opacity: .6; }
.cpu { color: #117dbb; }
.mem { color: #8b12ae; }
.disk { color: #4da60c; }
.net { color: #a74f01; }
.list-scroll { display: flex; flex-direction: column; width: 16px; background: #f0f0f0; }
.list-scroll svg { width: 16px; height: 17px; }
.list-scroll .thumb { flex: 1; margin: 0 1px 48px 0; background: #cdcdcd; }
.pane { flex: 1; padding: 19px 24px 0 26px; color: #707070; }
.pane-head { display: flex; justify-content: space-between; align-items: baseline; height: 38px; color: #000; font-size: 15px; line-height: 34px; }
.pane-head h2 { font-size: 25px; font-weight: 400; }
.caption-row { display: flex; justify-content: space-between; }
.chart { position: relative; height: 116px; margin: 1px 0; border: 1px solid #8b12ae; }
.chart svg { width: 100%; height: 100%; }
.grid { fill: none; stroke: rgba(139, 18, 174, .15); }
.tooltip {
  position: absolute;
  left: 313px;
  top: 21px;
  padding: 1px 6px;
  border: 1px solid #767676;
  background: #fff;
  color: #575757;
  box-shadow: 3px 3px 2px rgba(0, 0, 0, .4);
}
.second { margin: 3px 0; }
.composition { display: flex; height: 52px; border: 1px solid #8b12ae; }
.used { flex: 473; background: #f4f2f4; }
.modified { flex: 3; background: #ecdcf0; border: solid #cba6d8; border-width: 0 1px; }
.standby { flex: 92; border-right: 1px solid #cba6d8; }
.free { flex: 378; }
.stats { display: flex; margin-top: 24px; }
.stat-rows { display: grid; gap: 7px; width: 252px; }
.stat-rows > div { display: flex; gap: 25px; white-space: nowrap; }
.stat-rows dd { margin-top: 2px; color: #000; font-size: 18px; line-height: 26px; }
.specs { align-self: flex-start; border-collapse: collapse; line-height: 18px; }
.specs th { width: 175px; text-align: left; font-weight: 400; }
.specs td { color: #000; }
.window-foot { display: flex; align-items: center; height: 48px; padding-left: 7px; }
.window-foot button, .window-foot a { display: flex; align-items: center; gap: 7px; }
.window-foot a { color: #0066cc; text-decoration: none; font-size: 11px; }
.window-foot svg { width: 16px; height: 16px; }
.window-foot .less { width: 20px; height: 20px; }
.divider { width: 1px; height: 14px; margin: 0 9px; background: #c8c8c8; }

/* Taskbar */
.taskbar { flex: none; display: flex; justify-content: space-between; height: 40px; background: #d5d5d5; z-index: 1; }
.apps { display: flex; gap: 1px; }
.apps button { width: 48px; }
.apps button:first-child { margin-right: -1px; }
.apps button:nth-child(2) { margin-right: 2px; }
.apps svg { width: 24px; height: 24px; }
.apps .running { box-shadow: inset 4px 0 #d5d5d5, inset -4px 0 #d5d5d5, inset 0 -2px #0078d7; }
.apps .active { background: #f0eeee; box-shadow: inset 0 -2px #0078d7; }
.logo-pc { font: 700 8px "Open Sans", sans-serif; fill: #fff; }
.logo-ps { font: 600 10px "Open Sans", sans-serif; fill: #2fc1f5; }
.logo-pr { font: 600 11px "Open Sans", sans-serif; fill: #e08af5; }
.tray { display: flex; align-items: center; gap: 8px; padding-right: 6px; border-right: 1px solid #b5b5b5; margin-right: 4px; }
.tray svg { width: 16px; height: 16px; }
.lang { margin-left: 2px; }
.clock { display: grid; line-height: 18px; text-align: center; margin-left: 3px; }
.notifications { position: relative; width: 40px; height: 40px; }
.notifications .badge {
  position: absolute;
  left: 19px;
  top: 19px;
  width: 17px;
  height: 17px;
  border: 1px solid #555;
  border-radius: 50%;
  background: #d5d5d5;
  line-height: 15px;
}
```
